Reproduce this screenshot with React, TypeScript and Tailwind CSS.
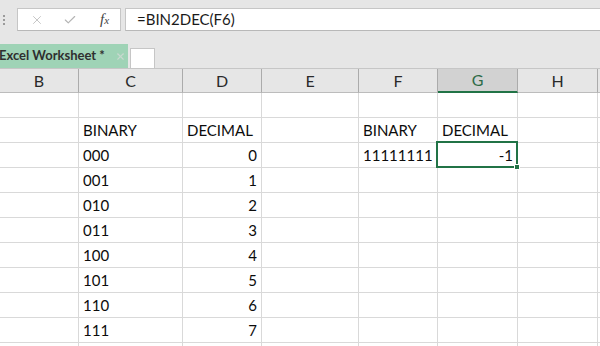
import { X, Check } from "lucide-react";

const cols = ["B", "C", "D", "E", "F", "G", "H", ""];

type Row = { c?: string; d?: string; f?: string; g?: string };

const rows: Row[] = [
  {},
  { c: "BINARY", d: "DECIMAL", f: "BINARY", g: "DECIMAL" },
  { c: "000", d: "0", f: "11111111", g: "-1" },
  { c: "001", d: "1" },
  { c: "010", d: "2" },
  { c: "011", d: "3" },
  { c: "100", d: "4" },
  { c: "101", d: "5" },
  { c: "110", d: "6" },
  { c: "111", d: "7" },
  {},
];

export default function App() {
  return (
    <div
      className="w-[600px] h-[346px] overflow-hidden bg-white text-[#0c0c0c]"
      style={{ fontFamily: "Lato, 'Open Sans', sans-serif" }}
    >
      {/* Formula bar */}
      <div className="h-[31px] bg-[#e6e6e6] flex items-end">
        <div className="w-[17px] h-[23px] flex flex-col items-center justify-center gap-[2px] pr-[10px] self-end">
          <span className="w-[2px] h-[2px] bg-[#9a9a9a]" />
          <span className="w-[2px] h-[2px] bg-[#9a9a9a]" />
          <span className="w-[2px] h-[2px] bg-[#9a9a9a]" />
        </div>
        <div className="w-[104px] h-[23px] bg-white border border-[#c6c6c6] border-b-[#b8b8b8] flex items-center">
          <X className="ml-[12px] text-[#b4b4b4]" size={14} strokeWidth={1.3} />
          <Check className="ml-[19px] text-[#b4b4b4]" size={14} strokeWidth={2} />
          <span
            className="ml-[23px] italic text-[15px] text-[#444] leading-none"
            style={{ fontFamily: "'Liberation Serif', serif" }}
          >
            f<span className="text-[11px]">x</span>
          </span>
        </div>
        <div className="ml-[4px] flex-1 h-[23px] bg-white border border-[#c6c6c6] border-b-[#b8b8b8] border-r-0 flex items-center pl-[11px] text-[15px] text-[#1a1a1a]">
          =BIN2DEC(F6)
        </div>
      </div>

      {/* Sheet tabs */}
      <div className="h-[37px] bg-[#e6e6e6] flex items-end">
        <div className="w-[128px] h-[24px] bg-[#9fd3b6] flex items-center text-[13px] font-bold text-[#2f2f2f] whitespace-nowrap">
          <span className="-ml-[1px]">Excel Worksheet *</span>
          <X className="ml-[10px] text-[#c8d8cf]" size={11} strokeWidth={2.5} />
        </div>
        <div className="ml-[2px] w-[25px] h-[20px] bg-white border border-[#c6c6c6] border-b-0" />
      </div>

      {/* Grid */}
      <div className="grid grid-cols-[79px_104px_79px_97px_79px_80px_80px_1fr] border-t border-[#c6c6c6]">
        {cols.map((c, i) => (
          <div
            key={"h" + i}
            className={
              c === "G"
                ? "h-[24px] bg-[#d2d2d2] border-r border-[#ababab] border-b-2 border-b-[#217346] flex items-center justify-center text-[16px] text-[#2e6b47]"
                : "h-[24px] bg-[#e6e6e6] border-r border-[#ababab] border-b border-b-[#bcbcbc] flex items-center justify-center text-[16px] text-[#2a2a2a]"
            }
          >
            {c}
          </div>
        ))}
        {rows.map((r, ri) =>
          cols.map((c, ci) => {
            const val =
              c === "C" ? r.c : c === "D" ? r.d : c === "F" ? r.f : c === "G" ? r.g : undefined;
            const numeric = val !== undefined && /^-?\d+$/.test(val) && (c === "D" || c === "G");
            const selected = ri === 2 && c === "G";
            return (
              <div
                key={ri + "-" + ci}
                className={
                  "relative h-[25px] border-r border-b border-[#d9d9d9] flex items-end pb-[4px] text-[15px] leading-none whitespace-nowrap " +
                  (numeric ? "justify-end pr-[4px]" : "justify-start pl-[4px]")
                }
              >
                {val && <span className="relative z-0">{val}</span>}
                {selected && (
                  <div className="absolute -left-[2px] -top-[2px] -right-[1px] -bottom-[1px] border-2 border-[#217346] z-10">
                    <div className="absolute -right-[4px] -bottom-[4px] w-[6px] h-[6px] bg-[#217346] border border-white" />
                  </div>
                )}
              </div>
            );
          })
        )}
      </div>
    </div>
  );
}
